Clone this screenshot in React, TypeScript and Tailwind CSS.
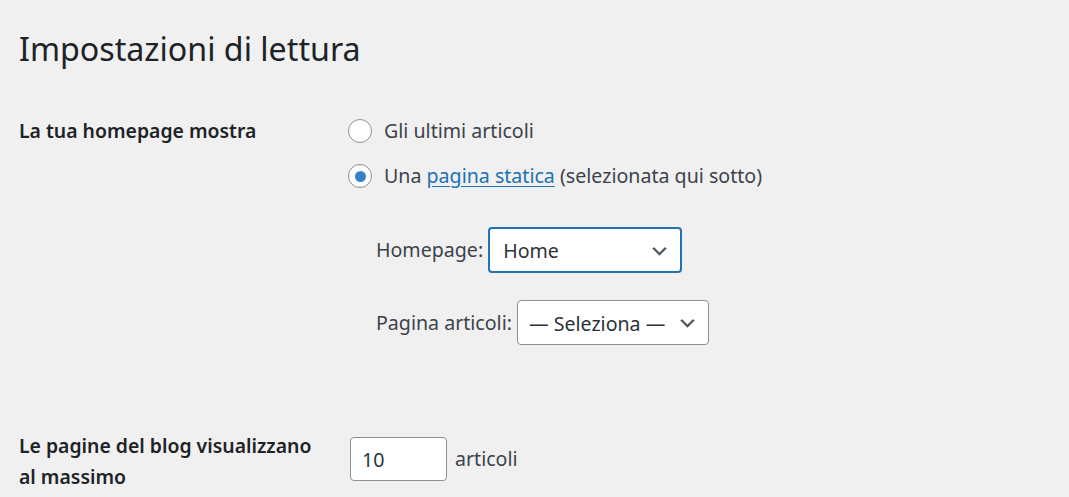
const font = "font-['Segoe_UI','Noto_Sans','Open_Sans',sans-serif]";

function Chevron() {
  return (
    <svg viewBox="0 0 20 20" className="h-[21px] w-[21px] shrink-0 fill-[#50575e]">
      <path d="M5 6l5 5 5-5 2 1-7 7-7-7 2-1z" />
    </svg>
  );
}

function Radio({ checked, children }: { checked?: boolean; children: React.ReactNode }) {
  return (
    <div className="flex h-[26px] items-center">
      <span className="flex h-[24px] w-[24px] shrink-0 items-center justify-center rounded-full border border-[#8c8f94] bg-white">
        {checked && <span className="h-[11px] w-[11px] rounded-full bg-[#3582c4]" />}
      </span>
      <span className="ml-[12px] text-[#3c434a]">{children}</span>
    </div>
  );
}

function Select({ value, focus, width }: { value: string; focus?: boolean; width: string }) {
  return (
    <div
      className={`flex items-center justify-between rounded-[4px] bg-white pr-[10px] pt-[2px] text-[#2c3338] ${width} ${
        focus ? "h-[46px] border-2 border-[#2271b1] pl-[13px]" : "h-[45px] border border-[#8c8f94] pl-[11px]"
      }`}
    >
      <span>{value}</span>
      <Chevron />
    </div>
  );
}

export default function App() {
  return (
    <div className={`min-h-screen bg-[#f0f0f1] px-[19px] pt-[29px] text-[19.6px] leading-[1.5] text-[#1d2327] ${font}`}>
      <h1 className="text-[32.2px] font-normal leading-[40px] text-[#1d2327]">Impostazioni di lettura</h1>

      <div className="mt-[49px] flex">
        <div className="w-[329px] shrink-0 text-[19.4px] font-semibold leading-[26px]">La tua homepage mostra</div>
        <div className="flex flex-col leading-[26px]">
          <Radio>Gli ultimi articoli</Radio>
          <div className="mt-[19px]">
            <Radio checked>
              Una{" "}
              <a href="#" className="text-[#2271b1] underline underline-offset-[3px]">
                pagina statica
              </a>{" "}
              (selezionata qui sotto)
            </Radio>
          </div>
          <div className="ml-[28px] mt-[38px] flex items-center gap-[5px] text-[#3c434a]">
            <span>Homepage:</span>
            <Select value="Home" focus width="w-[194px]" />
          </div>
          <div className="ml-[28px] mt-[27px] flex items-center gap-[5px] text-[#3c434a]">
            <span>Pagina articoli:</span>
            <Select value="— Seleziona —" width="w-[192px]" />
          </div>
        </div>
      </div>

      <div className="mt-[85px] flex">
        <div className="w-[331px] shrink-0 text-[19.4px] font-semibold leading-[31px]">
          Le pagine del blog visualizzano
          <br />
          al massimo
        </div>
        <div className="mt-[7px] flex h-[44px] items-center gap-[8px]">
          <div className="flex h-[44px] w-[97px] items-center rounded-[4px] border border-[#8c8f94] bg-white pl-[11px] pt-[2px] text-[#2c3338]">
            10
          </div>
          <span className="text-[#3c434a]">articoli</span>
        </div>
      </div>
    </div>
  );
}
